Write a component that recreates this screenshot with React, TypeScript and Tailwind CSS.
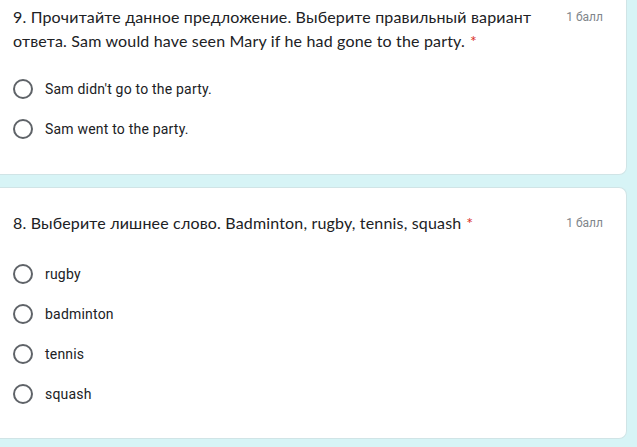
import React from "react";

const Radio = () => (
  <div className="w-[20px] h-[20px] rounded-full border-2 border-[#5f6368] shrink-0" />
);

const Option = ({ label }: { label: string }) => (
  <div className="flex items-center h-[40px] gap-[12px]">
    <Radio />
    <span className="text-[14px] text-[#202124] font-['Roboto',sans-serif] tracking-[0.2px]">
      {label}
    </span>
  </div>
);

const Card = ({
  lines,
  options,
  className,
  gapClass,
}: {
  lines: string[];
  options: string[];
  className: string;
  gapClass: string;
}) => (
  <div
    className={`bg-white border border-[#d0e4e6] border-l-0 rounded-r-[8px] mr-[10px] pl-[13px] pr-[23px] ${className}`}
  >
    <div className="flex items-start">
      <div className="flex-1 text-[16px] leading-[24px] text-[#202124] font-['Lato',sans-serif] tracking-[0.17px]">
        {lines.map((l, i) => (
          <div key={i} className="whitespace-nowrap">
            {l}
            {i === lines.length - 1 && <span className="text-[#d93025] ml-[5px]">*</span>}
          </div>
        ))}
      </div>
      <div className="text-[12px] leading-[24px] text-[#80868b] font-['Roboto',sans-serif] shrink-0 ml-[12px]">
        1 балл
      </div>
    </div>
    <div className={`flex flex-col ${gapClass}`}>
      {options.map((o) => (
        <Option key={o} label={o} />
      ))}
    </div>
  </div>
);

export default function App() {
  return (
    <div className="w-[637px] h-[447px] bg-[#d7f4f6] overflow-hidden">
      <Card
        className="-mt-[20px] pt-[24px] pb-[25px] rounded-tr-[8px]"
        gapClass="mt-[16px]"
        lines={[
          "9. Прочитайте данное предложение. Выберите правильный вариант",
          "ответа. Sam would have seen Mary if he had gone to the party.",
        ]}
        options={["Sam didn't go to the party.", "Sam went to the party."]}
      />
      <Card
        className="mt-[12px] pt-[23px] pb-[24px]"
        gapClass="mt-[19px]"
        lines={["8. Выберите лишнее слово. Badminton, rugby, tennis, squash"]}
        options={["rugby", "badminton", "tennis", "squash"]}
      />
    </div>
  );
}
